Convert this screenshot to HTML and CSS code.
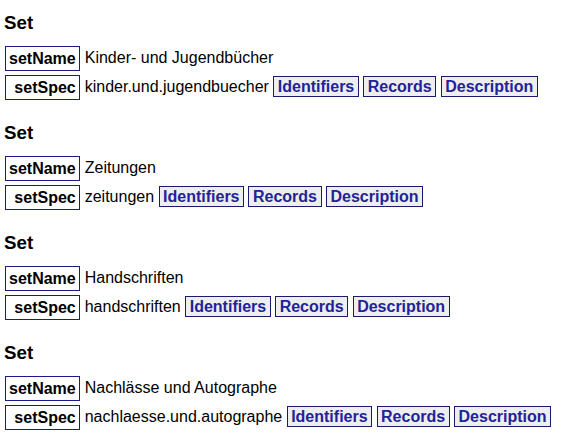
FILE: index.html
```html
<!DOCTYPE html>
<html lang="de">
<head>
  <meta charset="UTF-8" />
  <title>Sets</title>
  <link rel="stylesheet" href="styles.css">
</head>
<body>
  <div class="set">
    <h3>Set</h3>
    <table>
      <tr><td class="key">setName</td><td class="value">Kinder- und Jugendbücher</td></tr>
      <tr><td class="key">setSpec</td><td class="value">kinder.und.jugendbuecher <a class="link" href="#">Identifiers</a> <a class="link" href="#">Records</a> <a class="link" href="#">Description</a></td></tr>
    </table>
  </div>
  <div class="set">
    <h3>Set</h3>
    <table>
      <tr><td class="key">setName</td><td class="value">Zeitungen</td></tr>
      <tr><td class="key">setSpec</td><td class="value">zeitungen <a class="link" href="#">Identifiers</a> <a class="link" href="#">Records</a> <a class="link" href="#">Description</a></td></tr>
    </table>
  </div>
  <div class="set">
    <h3>Set</h3>
    <table>
      <tr><td class="key">setName</td><td class="value">Handschriften</td></tr>
      <tr><td class="key">setSpec</td><td class="value">handschriften <a class="link" href="#">Identifiers</a> <a class="link" href="#">Records</a> <a class="link" href="#">Description</a></td></tr>
    </table>
  </div>
  <div class="set">
    <h3>Set</h3>
    <table>
      <tr><td class="key">setName</td><td class="value">Nachlässe und Autographe</td></tr>
      <tr><td class="key">setSpec</td><td class="value">nachlaesse.und.autographe <a class="link" href="#">Identifiers</a> <a class="link" href="#">Records</a> <a class="link" href="#">Description</a></td></tr>
    </table>
  </div>
</body>
</html>
```

FILE: styles.css
```css
body {
  margin: 4px;
  font-family: "Liberation Sans", Arial, sans-serif;
  font-size: 16px;
  color: #000;
  background: #fff;
}
h3 {
  font-size: 18.72px;
  margin: 8px 0 12px;
}
table {
  border-collapse: separate;
  border-spacing: 1px 4px;
  margin: -4px 0 18px 0;
}
td {
  padding: 2.5px 3px;
  vertical-align: top;
}
td.key {
  border: 1px solid #1a1a88;
  font-weight: bold;
  text-align: right;
  white-space: nowrap;
}
td.value {
  padding-left: 4px;
}
a.link {
  padding: 1px 3.5px;
  border: 1px solid #1a1a70;
  background: #eeeeee;
  color: #22229a;
  font-weight: bold;
  text-decoration: none;
}
```
